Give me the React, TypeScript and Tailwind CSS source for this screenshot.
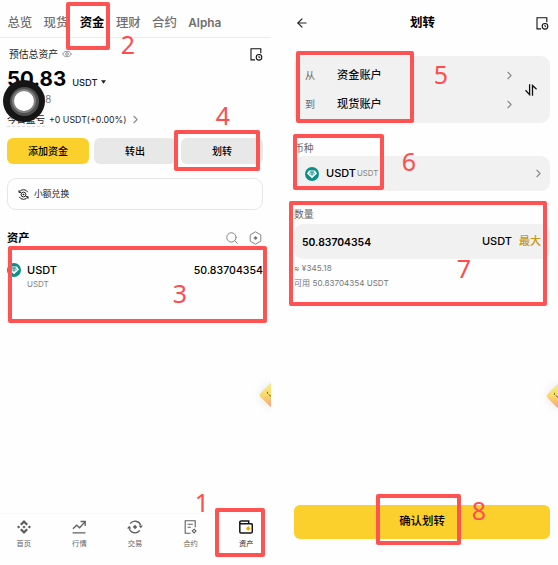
import React from 'react';
import { ArrowLeft, ChevronRight, Search } from 'lucide-react';

/* -------------------- Data -------------------- */
const tabs = ['总览', '现货', '资金', '理财', '合约', 'Alpha'];

const highlights = [
  { step: 1, x: 215, y: 508, w: 50, h: 49, labelX: 202, labelY: 502 },
  { step: 2, x: 66, y: 2, w: 44, h: 48, labelX: 128, labelY: 44 },
  { step: 3, x: 8, y: 246, w: 259, h: 77, labelX: 180, labelY: 293 },
  { step: 4, x: 174, y: 130, w: 86, h: 41, labelX: 223, labelY: 115 },
  { step: 5, x: 296, y: 51, w: 118, h: 72, labelX: 441, labelY: 74 },
  { step: 6, x: 293, y: 134, w: 91, h: 56, labelX: 409, labelY: 161 },
  { step: 7, x: 289, y: 201, w: 258, h: 105, labelX: 464, labelY: 268 },
  { step: 8, x: 376, y: 494, w: 85, h: 51, labelX: 479, labelY: 510 },
];

/* -------------------- Icons -------------------- */
function RecordIcon() {
  return (
    <svg width="13" height="13" viewBox="0 0 13 13" fill="none" stroke="#111" strokeWidth="1.1">
      <path d="M5 11.9H1V.7h9.8v4.6" />
      <circle cx="9" cy="9.3" r="2.8" />
      <path d="M8.9 7.8v1.6h1.3" strokeWidth="0.9" />
    </svg>
  );
}

function TetherIcon() {
  return (
    <svg width="14" height="14" viewBox="0 0 14 14" className="shrink-0">
      <circle cx="7" cy="7" r="7" fill="#0d8f88" />
      <path d="M4 3.6h6l2 2.8L7 11.2 2 6.4z" fill="#fff" />
      <path d="M5 4.9h4M7 4.9v3.9" stroke="#0d8f88" strokeWidth=".9" />
      <ellipse cx="7" cy="6.5" rx="2.8" ry=".8" fill="none" stroke="#0d8f88" strokeWidth=".6" />
    </svg>
  );
}

function EyeIcon() {
  return (
    <svg width="10" height="8" viewBox="0 0 10 8" fill="none" stroke="#777" strokeWidth=".8">
      <path d="M.6 4C2.6.3 7.4.3 9.4 4 7.4 7.7 2.6 7.7.6 4z" />
      <circle cx="5" cy="4" r="1.4" />
    </svg>
  );
}

function ConvertIcon() {
  return (
    <svg width="11" height="11" viewBox="0 0 11 11" fill="none" stroke="#222" strokeWidth="1">
      <path d="M1.2 3.2A4.9 4.9 0 0 1 9.8 3.2M9.8 7.8A4.9 4.9 0 0 1 1.2 7.8M1 1.2v2.2h2M10 9.8V7.6H8" />
      <circle cx="5.5" cy="5.5" r="2.4" />
      <path d="M5.5 4.4l1.1 1.1-1.1 1.1-1.1-1.1z" fill="#222" stroke="none" />
    </svg>
  );
}

function HexIcon() {
  return (
    <svg width="13" height="14" viewBox="0 0 13 14" fill="none" stroke="#858585" strokeWidth="1">
      <path d="M6.5.8l5.3 3.1v6.2l-5.3 3.1-5.3-3.1V3.9z" strokeLinejoin="round" />
      <path d="M6.5 4.9L8.6 7 6.5 9.1 4.4 7z" fill="#777" stroke="none" />
    </svg>
  );
}

function SwapIcon() {
  return (
    <svg width="12" height="12" viewBox="0 0 12 12" fill="none" stroke="#111" strokeWidth="1.3">
      <path d="M4.6.2v10.4L.5 6.2M7.5 11.8V1.4l4.1 3.8" />
    </svg>
  );
}

function HomeIcon() {
  return (
    <svg width="14" height="14" viewBox="0 0 14 14" fill="#5f5f5f">
      <path d="M7 0l4 4-1.6 1.6L7 3.2 4.6 5.6 3 4zM7 14l-4-4 1.6-1.6L7 10.8l2.4-2.4L11 10zM7 5.4L8.6 7 7 8.6 5.4 7zM1.6 5.4L3.2 7 1.6 8.6 0 7zM12.4 5.4L14 7l-1.6 1.6L10.8 7z" />
    </svg>
  );
}

function MarketIcon() {
  return (
    <svg width="14" height="14" viewBox="0 0 14 14" fill="none" stroke="#5f5f5f" strokeWidth="1.3">
      <path d="M1 8.8l3.6-3.6 3 2.6 5.2-5.7M8.6 1.5h4.6v4.4M.6 12.8h12.8" />
    </svg>
  );
}

function TradeIcon() {
  return (
    <svg width="16" height="14" viewBox="0 0 16 14" fill="none" stroke="#5f5f5f" strokeWidth="1.4">
      <path d="M3.2 3.6A6 6 0 0 1 13.6 5M12.8 10.4A6 6 0 0 1 2.2 8.4" />
      <path d="M0 8.6h4.4L2.2 5.8zM11.6 5.4H16l-2.2 2.8z" fill="#5f5f5f" stroke="none" />
      <path d="M8 4.8L10.2 7 8 9.2 5.8 7z" fill="#5f5f5f" stroke="none" />
    </svg>
  );
}

function FuturesIcon() {
  return (
    <svg width="13" height="14" viewBox="0 0 13 14" fill="none" stroke="#5f5f5f" strokeWidth="1.1">
      <path d="M6.5 13.2H1.2V.8h10v6.4M3.6 4.2h5.2M3.6 7.3h3.2" />
      <path d="M10.1 9.2l1.9 1.9-1.9 1.9-1.9-1.9z" />
    </svg>
  );
}

function WalletIcon() {
  return (
    <svg width="14" height="14" viewBox="0 0 14 14" fill="none" stroke="#161616" strokeWidth="1.5">
      <path d="M.8 1.2v10.6q0 1.2 1.2 1.2h10q1.3 0 1.3-1.3V5q0-1.2-1.2-1.2H2Q.8 3.8.8 2.4 1 1 2.2 1h7.5v2.8" />
      <path d="M9.3 6.1l2.3 2.3-2.3 2.3L7 8.4z" fill="#f0a800" stroke="none" />
    </svg>
  );
}

function Chevron() {
  return <ChevronRight className="h-[13px] w-[13px] shrink-0 text-[#8a8a8a]" strokeWidth={2} />;
}

const navItems = [
  { label: '首页', icon: HomeIcon },
  { label: '行情', icon: MarketIcon },
  { label: '交易', icon: TradeIcon },
  { label: '合约', icon: FuturesIcon },
  { label: '资产', icon: WalletIcon, active: true },
];

/* Floating mascot, half hidden behind the screen edge */
function Mascot({ className }: { className: string }) {
  return (
    <div className={`absolute ${className}`}>
      <svg width="26" height="26" viewBox="0 0 26 26" className="drop-shadow-[0_0_5px_rgba(0,0,0,0.1)]">
        <defs>
          <linearGradient id="mascot" x1="0" y1="0" x2="1" y2="1">
            <stop offset="0.1" stopColor="#f5ea8c" />
            <stop offset="0.5" stopColor="#f9da68" />
            <stop offset="0.9" stopColor="#f8a480" />
          </linearGradient>
        </defs>
        <rect x="3.5" y="3.5" width="19" height="19" rx="3" transform="rotate(45 13 13)" fill="url(#mascot)" />
        <path d="M8.5 9.8v2M9.7 12.6q1.5 2 3.3 1.2" stroke="#5b4a20" strokeWidth="0.8" fill="none" />
      </svg>
    </div>
  );
}

/* -------------------- Screens -------------------- */
function FundingScreen() {
  return (
    <div className="relative flex h-full w-[271px] flex-col overflow-hidden">
      <div className="flex h-[38px] shrink-0 items-center gap-[11.4px] border-b border-[#ececec] pl-[7.4px] pt-[8px] text-[12.4px] font-medium leading-[14px] text-[#707070]">
        {tabs.map(tab => (
          <span key={tab} className={tab === '资金' ? 'font-bold text-black' : tab === 'Alpha' ? 'text-[11.8px] font-semibold' : ''}>
            {tab}
          </span>
        ))}
      </div>

      <div className="flex h-[32px] shrink-0 items-center pl-[9px] pr-2 text-[9.8px] text-[#222]">
        <span className="mr-1 translate-y-px">预估总资产</span>
        <EyeIcon />
        <span className="ml-auto"><RecordIcon /></span>
      </div>
      <div className="flex h-[18px] shrink-0 items-baseline pl-[7px] leading-[17px]">
        <span className="text-[20.5px] font-bold text-black">50.83</span>
        <span className="ml-1.5 text-[9.3px] font-medium text-[#222]">USDT</span>
        <svg width="5" height="4" viewBox="0 0 6 4" className="ml-[3px] self-center translate-y-[3px]"><path d="M0 0h6L3 4z" fill="#222" /></svg>
      </div>
      <div className="flex h-[25px] shrink-0 items-center pl-[7px] text-[9.7px] text-[#777]">≈ ¥345.18</div>
      <div className="flex h-[13px] shrink-0 items-center pl-[7px] text-[9.5px] text-[#222]">
        <span className="border-b border-dashed border-[#ddd] leading-[13px]">今日盈亏</span>
        <span className="ml-1 mr-[3px] text-[8.8px]">+0 USDT(+0.00%)</span>
        <Chevron />
      </div>

      <div className="ml-[7px] mr-2 mt-3 grid h-[26px] shrink-0 grid-cols-3 gap-[5px] text-[10px] font-medium text-black">
        <button className="rounded-md bg-[#fbd02d]">添加资金</button>
        <button className="rounded-md bg-[#e8e8e8]">转出</button>
        <button className="rounded-md bg-[#e8e8e8]">划转</button>
      </div>
      <div className="ml-[7px] mr-2 mt-[14px] flex h-8 shrink-0 items-center gap-[5px] rounded-[9px] border border-[#e6e6e6] pl-[10px] text-[8.8px] text-[#222]">
        <ConvertIcon />
        小额兑换
      </div>

      <div className="mt-[18px] flex h-5 shrink-0 items-center pl-[7px] pr-[9px] text-[11.2px] font-bold text-black">
        资产
        <Search className="ml-auto h-[14px] w-[14px] text-[#858585]" strokeWidth={1.7} />
        <span className="ml-[10px]"><HexIcon /></span>
      </div>
      <div className="mt-[15px] flex shrink-0 pl-[7px] pr-2">
        <TetherIcon />
        <div className="ml-1.5 flex flex-col">
          <span className="text-[11px] font-medium leading-[14px] text-black">USDT</span>
          <span className="text-[8px] leading-[14px] text-[#858585]">USDT</span>
        </div>
        <span className="ml-auto text-[10.6px] font-medium leading-[15px] text-black">50.83704354</span>
      </div>

      <div className="-ml-[4px] mt-auto grid h-[52px] w-[278px] shrink-0 grid-cols-5 border-t border-[#fafafa]">
        {navItems.map(({ label, icon: Icon, active }) => (
          <div key={label} className="flex flex-col items-center gap-1 pt-[6px]">
            <Icon />
            <span className={`text-[7.3px] leading-[12px] ${active ? 'text-[#222]' : 'text-[#666]'}`}>{label}</span>
          </div>
        ))}
      </div>

      {/* Touch cursor over the balance */}
      <div className="absolute left-[3px] top-[80px] flex h-[42px] w-[42px] items-center justify-center rounded-full bg-[#151515] shadow-[0_0_14px_rgba(0,0,0,0.06)]">
        <div className="flex h-[29px] w-[29px] items-center justify-center rounded-full bg-[#505050]">
          <div className="h-[24px] w-[24px] rounded-full border-2 border-[#808080] bg-white" />
        </div>
      </div>
      <Mascot className="-right-[14px] top-[382px]" />
    </div>
  );
}

function AccountRow({ label, account }: { label: string; account: string }) {
  return (
    <div className="flex h-[29px] items-center">
      <span className="w-8 text-[10px] text-[#666]">{label}</span>
      <span className="text-[11.2px] font-medium text-[#111]">{account}</span>
      <span className="ml-auto"><Chevron /></span>
    </div>
  );
}

function TransferScreen() {
  return (
    <div className="relative flex h-full w-[270px] flex-col overflow-hidden pl-[6px] pr-2">
      <div className="flex h-[46px] shrink-0 items-center justify-between pl-[1px] pr-[1px]">
        <ArrowLeft className="h-[14px] w-[14px] text-[#222]" strokeWidth={2} />
        <h1 className="text-[12.5px] font-bold text-black">划转</h1>
        <RecordIcon />
      </div>

      <div className="mt-[10px] flex h-[67px] shrink-0 items-center rounded-[9px] bg-[#f1f1f1] pl-[11px] pr-[13px]">
        <div className="flex-1">
          <AccountRow label="从" account="资金账户" />
          <AccountRow label="到" account="现货账户" />
        </div>
        <span className="ml-[9px]"><SwapIcon /></span>
      </div>

      <div className="mt-[17px] h-4 shrink-0 text-[9.8px] leading-[17px] text-[#666]">币种</div>
      <div className="flex h-[35px] shrink-0 items-center rounded-[9px] bg-[#f1f1f1] pl-[11px] pr-[5px]">
        <TetherIcon />
        <span className="ml-[7px] text-[11px] font-medium text-black">USDT</span>
        <span className="ml-[1px] text-[7.8px] text-[#858585]">USDT</span>
        <span className="ml-auto"><Chevron /></span>
      </div>

      <div className="mt-[15px] h-[18px] shrink-0 text-[9.8px] leading-[18px] text-[#666]">数量</div>
      <div className="flex h-[35px] shrink-0 items-center rounded-[9px] bg-[#f1f1f1] pl-2 pr-[9px] text-[11px] font-medium text-black">
        <span className="translate-y-px text-[10.4px] font-semibold">50.83704354</span>
        <span className="ml-auto">USDT</span>
        <span className="ml-[7px] text-[#c99616]">最大</span>
      </div>
      <div className="mt-[2px] text-[8.1px] leading-[15px] text-[#777]">
        <p className="tracking-[0.1px]">≈ ¥345.18</p>
        <p>可用 50.83704354 USDT</p>
      </div>

      <button className="mb-[26px] mt-auto h-[34px] shrink-0 rounded-md bg-[#fbd02d] text-[11.4px] font-medium text-black">
        确认划转
      </button>
      <Mascot className="-right-[14px] top-[383px]" />
    </div>
  );
}

/* -------------------- Component -------------------- */
export default function App() {
  return (
    <div className="relative flex h-[565px] w-[558px] justify-between overflow-hidden bg-[#fefefe] font-[Inter,'Noto_Sans_CJK_SC',sans-serif]">
      <FundingScreen />
      <TransferScreen />

      {highlights.map(({ step, x, y, w, h, labelX, labelY }) => (
        <React.Fragment key={step}>
          <div
            className="absolute rounded-[2px] border-4 border-[#ff5252]"
            style={{ left: x, top: y, width: w, height: h }}
          />
          <span
            className="absolute -translate-x-1/2 -translate-y-1/2 font-['Noto_Sans',sans-serif] text-[25px] leading-none text-[#ff4d4f]"
            style={{ left: labelX, top: labelY }}
          >
            {step}
          </span>
        </React.Fragment>
      ))}
    </div>
  );
}
